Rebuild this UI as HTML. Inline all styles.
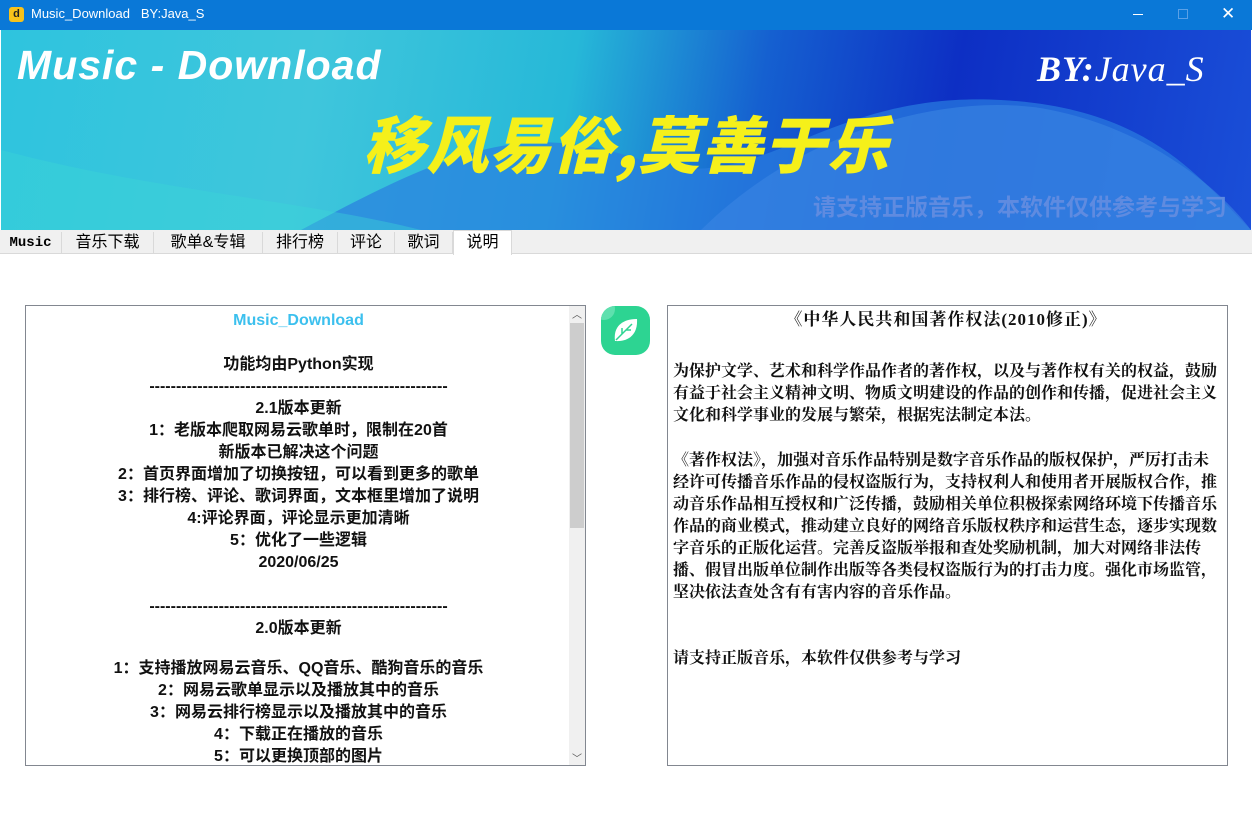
<!DOCTYPE html>
<html><head><meta charset="utf-8"><style>
*{margin:0;padding:0;box-sizing:border-box}
body{width:1252px;height:829px;overflow:hidden;background:#fff;font-family:"Liberation Sans","Noto Sans CJK SC",sans-serif;position:relative}
.title{position:absolute;left:0;top:0;width:1252px;height:30px;background:#0a78d7;color:#fff;font-size:13px}
.banner{position:absolute;left:1px;top:30px;width:1250px;height:200px;overflow:hidden;
background:linear-gradient(100deg,#2ec4de 0%,#3fc6dc 25%,#26b8d8 45%,#1560d0 60%,#0d2fc4 75%,#1a4fd8 100%)}
.tabs{position:absolute;left:0;top:230px;width:1252px;height:24px;background:#f0f0f0;border-bottom:1px solid #d9d9d9}
.tab{position:absolute;top:2px;height:22px;border-right:1px solid #d9d9d9;font-size:16px;line-height:22px;text-align:center;color:#000}
.box{position:absolute;top:305px;width:561px;height:461px;border:1px solid #828790;background:#fff;overflow:hidden}
.l{text-align:center;font-weight:bold;font-size:16px;line-height:22px;color:#111;padding-top:4px;width:545px}
.r{font-family:"Liberation Serif","Noto Serif CJK SC",serif;font-weight:bold;font-size:16px;line-height:22px;color:#111;padding:3px 8px 0 5px}
</style></head><body>
<div class="title">
<div style="position:absolute;left:9px;top:7px;width:15px;height:15px;background:#f7c21b;border-radius:3px;color:#222;font-size:11px;font-weight:bold;text-align:center;line-height:15px">d</div>
<div style="position:absolute;left:31px;top:6px;">Music_Download&nbsp;&nbsp;&nbsp;BY:Java_S</div>
<div style="position:absolute;left:1133px;top:14px;width:10px;height:1px;background:#fff"></div>
<div style="position:absolute;left:1178px;top:9px;width:10px;height:10px;border:1px solid #5aa0e6"></div>
<div style="position:absolute;left:1221px;top:4px;font-size:17px">✕</div>
</div>
<div class="banner">
<svg width="1250" height="200" style="position:absolute;left:0;top:0">
<path d="M300 200 C 450 120, 520 90, 640 130 C 760 170, 820 60, 1000 70 C 1150 78, 1200 150, 1250 200 Z" fill="#2a7ee0" opacity=".7"/>
<path d="M0 120 C 150 160, 300 170, 420 200 L0 200Z" fill="#3dd8d6" opacity=".4"/>
<path d="M700 200 C 800 100, 950 60, 1050 80 C 1150 100, 1220 160, 1250 200Z" fill="#3a86e2" opacity=".6"/>
</svg>
<div style="position:absolute;left:16px;top:12px;font-size:41px;font-weight:900;font-style:italic;color:#fff;letter-spacing:1px">Music - Download</div>
<div style="position:absolute;left:362px;top:66px;font-size:62px;font-weight:900;font-style:italic;color:#f5f01a;font-family:'Noto Sans CJK SC',sans-serif;letter-spacing:1px">移风易俗,莫善于乐</div>
<div style="position:absolute;left:1036px;top:18px;font-size:36px;color:#fff;font-family:'Liberation Serif',serif;font-style:italic;font-weight:bold;letter-spacing:1px">BY:<span style="font-weight:normal">Java_S</span></div>
<div style="position:absolute;left:812px;top:158px;font-size:23px;color:#5f8be0;font-weight:bold;font-family:'Noto Sans CJK SC',sans-serif">请支持正版音乐，本软件仅供参考与学习</div>
</div>
<div class="tabs">
<div class="tab" style="left:0;width:62px;font-family:'Liberation Mono',monospace;font-size:14px;font-weight:bold">Music</div>
<div class="tab" style="left:62px;width:92px">音乐下载</div>
<div class="tab" style="left:154px;width:109px">歌单&amp;专辑</div>
<div class="tab" style="left:263px;width:75px">排行榜</div>
<div class="tab" style="left:338px;width:57px">评论</div>
<div class="tab" style="left:395px;width:58px">歌词</div>
<div class="tab" style="left:453px;top:0;height:25px;width:59px;background:#fff;border:1px solid #d9d9d9;border-bottom:none;line-height:24px">说明</div>
</div>
<div class="box" style="left:25px">
<div class="l">
<div style="color:#3cc0ee">Music_Download</div><div>&nbsp;</div>
<div>功能均由Python实现</div>
<div>--------------------------------------------------------</div>
<div>2.1版本更新</div>
<div>1：老版本爬取网易云歌单时，限制在20首</div>
<div>新版本已解决这个问题</div>
<div>2：首页界面增加了切换按钮，可以看到更多的歌单</div>
<div>3：排行榜、评论、歌词界面，文本框里增加了说明</div>
<div>4:评论界面，评论显示更加清晰</div>
<div>5：优化了一些逻辑</div>
<div>2020/06/25</div><div>&nbsp;</div>
<div>--------------------------------------------------------</div>
<div>2.0版本更新</div><div style="height:18px"></div>
<div>1：支持播放网易云音乐、QQ音乐、酷狗音乐的音乐</div>
<div>2：网易云歌单显示以及播放其中的音乐</div>
<div>3：网易云排行榜显示以及播放其中的音乐</div>
<div>4：下载正在播放的音乐</div>
<div>5：可以更换顶部的图片</div>
</div>
<div style="position:absolute;right:0;top:0;width:16px;height:459px;background:#f0f0f0">
<div style="text-align:center;font-size:10px;color:#555;height:17px">︿</div>
<div style="position:absolute;left:1px;top:17px;width:14px;height:205px;background:#cdcdcd"></div>
<div style="position:absolute;bottom:0;width:16px;text-align:center;font-size:10px;color:#555">﹀</div>
</div>
</div>
<div style="position:absolute;left:601px;top:306px;width:49px;height:49px;border-radius:14px;background:#2dd492;overflow:hidden">
<div style="position:absolute;left:-8px;top:-8px;width:22px;height:22px;border-radius:50%;background:#5ee0ae"></div>
<svg width="49" height="49" style="position:absolute;left:0;top:0"><path d="M14 35 C 12 20, 22 13, 36 13 C 37 28, 28 36, 14 35Z" fill="#fff"/><path d="M15 34 L31 18 M21 28 L21 22 M25 24 L30 24" stroke="#2dd492" stroke-width="1.5" fill="none"/></svg>
</div>
<div class="box" style="left:667px">
<div class="r">
<div style="text-align:center;font-size:17px;letter-spacing:1px">《中华人民共和国著作权法(2010修正)》</div><div style="height:30px"></div>
<div>为保护文学、艺术和科学作品作者的著作权，以及与著作权有关的权益，鼓励有益于社会主义精神文明、物质文明建设的作品的创作和传播，促进社会主义文化和科学事业的发展与繁荣，根据宪法制定本法。</div>
<div style="height:23px"></div>
<div>《著作权法》，加强对音乐作品特别是数字音乐作品的版权保护，严厉打击未经许可传播音乐作品的侵权盗版行为，支持权利人和使用者开展版权合作，推动音乐作品相互授权和广泛传播，鼓励相关单位积极探索网络环境下传播音乐作品的商业模式，推动建立良好的网络音乐版权秩序和运营生态，逐步实现数字音乐的正版化运营。完善反盗版举报和查处奖励机制，加大对网络非法传播、假冒出版单位制作出版等各类侵权盗版行为的打击力度。强化市场监管，坚决依法查处含有有害内容的音乐作品。</div>
<div style="height:44px"></div>
<div>请支持正版音乐，本软件仅供参考与学习</div>
</div>
</div>
</body></html>
